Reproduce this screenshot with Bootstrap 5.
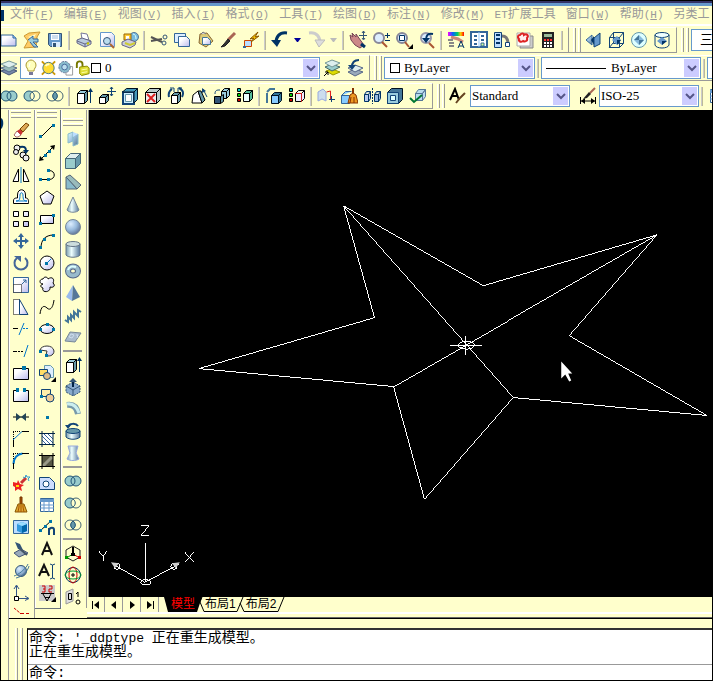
<!DOCTYPE html>
<html lang="zh-CN">
<head>
<meta charset="utf-8">
<meta name="viewport" content="width=device-width, initial-scale=1">
<title>CAD 绘图</title>
<link href="https://cdn.jsdelivr.net/npm/bootstrap@5.3.0/dist/css/bootstrap.min.css" rel="stylesheet">
<style>
:root{--cream:#ffffcc;--line:#999;--blue:#6699cc}
body{font:12px/14px "Liberation Serif","Noto Sans CJK SC",serif;color:#000;background:var(--cream);border:1px solid #000;overflow:hidden}
button,select,input{font:inherit;color:inherit}
svg{display:block;flex:none}
.titlestrip{height:5px;background:var(--blue);border-top:2px solid #336}
.menubar{height:20px;padding-left:9px;border-bottom:2px solid #fff;background:var(--cream)}
.menubar a{color:#999;text-decoration:none;white-space:nowrap;margin-right:10px;font:12px/16px "Liberation Mono","Noto Sans CJK SC",monospace}
.menubar small{font-size:11px;line-height:16px}
.menubar .edge{width:3px;height:11px;background:#036;margin:0 6px 0 -9px}
.bar{height:28px;overflow:hidden;background:var(--cream)}
.bar>*{flex:none}
.seg{height:26px;border-right:1px solid var(--line);border-bottom:1px solid var(--line);border-top:1px solid #fff;padding-right:3px}
.clip{margin-left:-4px}
.tool{width:23px;height:22px;padding:0;border:0;background:none;display:flex;align-items:center;justify-content:center;flex:none}
.tool svg{width:18px;height:18px}
.drop{width:13px}
.drop svg{width:7px;height:4px}
.undo-list{color:#009}
.redo-list{color:#bbb}
.split{width:2px;height:19px;margin:0 2px;border-left:1px solid #ccc;border-right:1px solid #bbb999}
.split-h{height:2px;width:19px;margin:2px 0;background:var(--line)}
.grip{width:8px;height:24px;display:flex;justify-content:space-between;flex:none}
.grip::before,.grip::after{content:"";width:3px;border-left:1px solid #fff;border-right:1px solid var(--line);background:var(--cream)}
.grip-h{width:20px;height:8px;margin-bottom:2px;flex-direction:column}
.grip-h::before,.grip-h::after{width:auto;height:3px;border:0;border-top:1px solid #fff;border-bottom:1px solid var(--line)}
.grip-dock{height:auto;margin:0 4px 0 6px}
.combo{height:22px;background:#fff;border:1px solid var(--blue);padding:1px;display:flex;align-items:center;overflow:hidden}
.combo select{appearance:none;border:0;background:none;padding:0;flex:1 1 0;min-width:0;font-size:13px;line-height:16px;outline-offset:-1px}
.combo .arrow{width:15px;height:18px;background:#ccccff}
.after{margin-left:2px}
.w-style{width:100px}
.w-color{width:151px}
.w-type{width:160px}
.w-layer{width:300px}
.swatch{width:10px;height:10px;border:1px solid #000;background:#fff;flex:none}
.tools{width:26px;padding-right:2px;border-right:1px solid var(--line);box-shadow:inset 1px 0 #fff;align-self:flex-start}
.tools .tool{height:22px}
.gutter{width:7px}
.work{border-left:1px solid var(--line)}
.stage{background:#000;border-left:1px solid var(--line);min-width:0;margin-left:1px}
.stage svg{width:100%;height:100%}
.tabs{height:15px;background:var(--cream)}
.tabs button{height:15px;border:0;padding:0;background:none}
.tabs .step{width:18px;border-right:1px solid var(--line);display:flex;align-items:center;justify-content:center}
.tabs .sheet{border-bottom:1px solid #000;font:12px/14px "Liberation Sans","Noto Sans CJK SC",sans-serif}
.tabs .current{background:#000;color:#f00}
.foot{height:6px;border-top:2px solid #fff;border-bottom:1px solid #666}
.dock{border-top:1px solid #000;padding-top:9px}
.console{background:#fff;border-top:2px solid #333;border-left:1px solid #000;font:13px/14px "Liberation Mono","Noto Sans CJK SC",monospace}
.console .zh{font-size:14px;line-height:14px}
.console .log{height:34px;padding:1px 1px 0;overflow:hidden}
.console .log div{height:14px;white-space:pre}
.console .entry{border-top:1px solid var(--line);height:16px;padding:1px 1px 0;overflow:hidden}
.console input{border:0;padding:0;outline:0;background:none;height:14px}
</style>
<script src="https://cdn.jsdelivr.net/npm/bootstrap@5.3.0/dist/js/bootstrap.bundle.min.js"></script>
</head>
<body class="vh-100 d-flex flex-column">
<svg width="0" height="0" class="position-absolute" aria-hidden="true">
<defs>
<linearGradient id="gl" x1="0" y1="0" x2="1" y2="1"><stop offset=".3" stop-color="#fff"/><stop offset="1" stop-color="#bbe"/></linearGradient>
<linearGradient id="gs" x1="0" y1="0" x2="1" y2="1"><stop offset="0" stop-color="#dff"/><stop offset=".5" stop-color="#9bd"/><stop offset="1" stop-color="#578"/></linearGradient>
<linearGradient id="gh" x1="0" y1="0" x2="1" y2="0"><stop offset="0" stop-color="#79a"/><stop offset=".4" stop-color="#eff"/><stop offset="1" stop-color="#579"/></linearGradient>
<radialGradient id="gr" cx=".35" cy=".3" r=".8"><stop offset="0" stop-color="#def"/><stop offset=".5" stop-color="#9bd"/><stop offset="1" stop-color="#568"/></radialGradient>
<linearGradient id="rainbow"><stop offset="0" stop-color="#f0f"/><stop offset=".3" stop-color="#06f"/><stop offset=".6" stop-color="#0c6"/><stop offset=".8" stop-color="#fc0"/><stop offset="1" stop-color="#f00"/></linearGradient>
</defs>
<!-- file tools -->
<symbol id="new" viewBox="0 0 18 18"><path d="M1 4h12l3 3v8H1z" fill="url(#gl)" stroke="#369"/><path d="M13 4v3h3" fill="#9cf" stroke="#369"/></symbol>
<symbol id="open" viewBox="0 0 18 18"><path d="M1 5l5-3 11-1-3 5-1 10-12 1 4-7z" fill="#fc6" stroke="#c93"/><path d="M5 6l8-3-3 5z" fill="#ffc"/><path d="M5 9l5-4v3h5v3h-5l5 5h-4l-4-5" fill="#9cd" stroke="#369"/></symbol>
<symbol id="save" viewBox="0 0 18 18"><path d="M2.500 2.500h13v13h-11l-2-2z" fill="#69c" stroke="#357"/><path d="M5 3h8v6H5z" fill="#fff"/><path d="M6 5h6M6 7h6" stroke="#9bd"/><path d="M6 11h8v5H6z" fill="#def"/><path d="M7 12h3v4H7z" fill="#357"/></symbol>
<symbol id="print" viewBox="0 0 18 18"><path d="M6 2l6 1 2 6-7-1z" fill="#fff" stroke="#779"/><path d="M2 9l5-2 9 3v3l-6 3-8-4z" fill="#bcd" stroke="#668"/><path d="M2 10l8 3 6-3M10 13v3" stroke="#668" fill="none"/><path d="M12 13l2-1" stroke="#cc0" stroke-width="2"/></symbol>
<symbol id="preview" viewBox="0 0 18 18"><path d="M2.500 1.500h11l3 3v11h-14z" fill="url(#gl)" stroke="#69c"/><circle cx="9" cy="10" r="3.500" fill="#bde" stroke="#357"/><path d="M12 13l4 4" stroke="#a63" stroke-width="2"/></symbol>
<symbol id="publish" viewBox="0 0 18 18"><circle cx="13" cy="6" r="4.500" fill="#7bd" stroke="#579"/><path d="M12 3c2 0 3 2 3 5" stroke="#dff" fill="none"/><path d="M3 3h7v6H3z" fill="#fc3" stroke="#960"/><path d="M5 5h3v3H5z" fill="#fff"/><path d="M1 11l6-3 8 3-1 3-5 3-8-3z" fill="#ccd" stroke="#668"/><path d="M4 12l5 2 5-2" stroke="#cc3" fill="none" stroke-width="2"/></symbol>
<symbol id="cut" viewBox="0 0 18 18"><path d="M1 6l11 5M1 10l11-2" stroke="#555" stroke-width="2"/><circle cx="15" cy="6" r="2" fill="none" stroke="#357"/><circle cx="14" cy="12" r="2" fill="none" stroke="#357"/></symbol>
<symbol id="copy" viewBox="0 0 18 18"><path d="M1.500 2.500h11v9h-11z" fill="#def" stroke="#369"/><path d="M5.500 5.500h8l3 3v7h-11z" fill="url(#gl)" stroke="#369"/></symbol>
<symbol id="paste" viewBox="0 0 18 18"><path d="M4 3l7-1 6 8-7 6-7-4z" fill="#dc7" stroke="#863"/><path d="M6.500 6.500h5l3 3v4h-8z" fill="url(#gl)" stroke="#479"/><path d="M5 3l2-2 3 2" stroke="#777" fill="#ccc"/></symbol>
<symbol id="brush" viewBox="0 0 18 18"><path d="M16 2L9 9" stroke="#a65" stroke-width="3"/><path d="M9 8l2 2-5 5-4 1 3-3z" fill="#333" stroke="#222"/></symbol>
<symbol id="blockedit" viewBox="0 0 18 18"><path d="M2.500 9.500h7v6h-7z" fill="#bdf" stroke="#c40"/><path d="M16 1L8 8l4-1-3 4 8-6-4 1z" fill="#fc0" stroke="#850"/><path d="M1 15h3v2H1z" fill="#369"/></symbol>
<symbol id="undo" viewBox="0 0 18 18"><path d="M16 2C8 1 5 6 5 12" fill="none" stroke="#036" stroke-width="3"/><path d="M0 9h10l-4 7z" fill="#036"/></symbol>
<symbol id="redo" viewBox="0 0 18 18"><path d="M2 2c8-1 11 4 11 10" fill="none" stroke="#ccc" stroke-width="3"/><path d="M18 9H8l4 7z" fill="#ddd" stroke="#bbb"/></symbol>
<symbol id="tri" viewBox="0 0 7 4"><path d="M0 0h7L4 4H3z" fill="currentColor"/></symbol>
<symbol id="pan" viewBox="0 0 18 18"><path d="M1 4l3 2-1-4 4 4V3l5 7 3 4-4 3-5-3-4-5z" fill="#c88" stroke="#745"/><path d="M12 13l4 3" stroke="#036" stroke-width="3"/><path d="M14.500 0v8M10 4.500h8M13 2l1.500-2L16 2M13 7l1.500 2L16 7" stroke="#357" fill="none"/></symbol>
<symbol id="zoompm" viewBox="0 0 18 18"><circle cx="7" cy="7" r="5" fill="#def" stroke="#889" stroke-width="2"/><path d="M10 11l5 5" stroke="#a53" stroke-width="2"/><path d="M13 4.500h5M15.500 2v5M13 9.500h5" stroke="#036"/></symbol>
<symbol id="zoomwin" viewBox="0 0 18 18"><circle cx="7" cy="7" r="5" fill="#def" stroke="#889" stroke-width="2"/><path d="M4.500 4.500h5v5h-5z" fill="#fff" stroke="#036"/><path d="M10 11l4 5" stroke="#a53" stroke-width="2"/><path d="M18 13v5h-5z"/></symbol>
<symbol id="zoomprev" viewBox="0 0 18 18"><circle cx="8" cy="7" r="5" fill="#def" stroke="#99a" stroke-width="2"/><path d="M11 12l5 5" stroke="#a53" stroke-width="2"/><path d="M15 3C10 2 8 4 8 9" stroke="#036" stroke-width="2" fill="none"/><path d="M4 7h8l-4 5z" fill="#036"/></symbol>
<symbol id="props" viewBox="0 0 18 18"><path d="M1 1h16v4H1z" fill="url(#rainbow)"/><path d="M4 6l7 2 5 3" stroke="#c87" stroke-width="3" fill="none"/><path d="M1 9h5M2 12h5M2 15h5" stroke="#888" stroke-width="2"/><path d="M11 17l3-7 3 7M12 15h4" stroke="#036" fill="none"/></symbol>
<symbol id="palette" viewBox="0 0 18 18"><path d="M1 1h16v15H1z" fill="#fff" stroke="#369" stroke-width="2"/><path d="M4 4h3v2H4zM11 4h3v2h-3zM4 8h3v2H4zM11 8h3v2h-3zM4 12h3v2H4z" fill="#369"/><path d="M11 12h3v3h-3z" fill="#cf9" stroke="#369"/><path d="M9 1v15" stroke="#9cf"/></symbol>
<symbol id="toolpal" viewBox="0 0 18 18"><path d="M1.500 1.500h7v15h-7z" fill="#bdf" stroke="#147"/><path d="M3 4h4M3 8h4M3 12h4" stroke="#036" stroke-width="2"/><path d="M9 5c4 0 5 2 6 6" fill="none" stroke="#777" stroke-width="3"/><path d="M12.500 11.500h4v4h-4z" fill="#fff" stroke="#147"/></symbol>
<symbol id="markup" viewBox="0 0 18 18"><path d="M6 5h11v12H4z" fill="#ccc" stroke="#888"/><path d="M1 2h13v13H1z" fill="#fff" stroke="#aaa"/><path d="M4 4c2-3 4-1 4 0 3-2 5 1 3 3 1 3-2 4-4 3-3 2-5-1-4-2-2-2-1-4 1-4z" fill="#fee" stroke="#d22" stroke-width="2"/></symbol>
<symbol id="calc" viewBox="0 0 18 18"><path d="M3 1h12v16H3z" fill="#222"/><path d="M5 3h8v3H5z" fill="#9b9"/><path d="M5 8h2v2H5zM8 8h2v2H8zM11 8h2v2h-2z" fill="#f33"/><path d="M5 11h2v2H5zM8 11h2v2H8zM11 11h2v2h-2zM5 14h2v2H5zM8 14h2v2H8zM11 14h2v2h-2z" fill="#fff"/></symbol>
<symbol id="orb" viewBox="0 0 18 18"><path d="M2 9l6-5v10z" fill="url(#gs)" stroke="#369"/><path d="M7 9l3-4v9z" fill="#036"/><path d="M10 7l6-5v11l-6 3z" fill="#69c" stroke="#147"/></symbol>
<symbol id="orbbox" viewBox="0 0 18 18"><path d="M2.500 6.500h10v10h-10zM2.500 6.500l4-5h10v11l-4 4M12.500 6.500l4-5M6.500 1.500v11h10M6 12l-4 5" fill="none" stroke="#147"/><path d="M5 9l5-4 4 4-4 5z" fill="#69c"/><path d="M10 9h4l-4 5z" fill="#036"/></symbol>
<symbol id="orbsph" viewBox="0 0 18 18"><circle cx="9" cy="9" r="7.500" fill="#dff" stroke="#69a"/><path d="M4 9l5-5 5 5-5 5z" fill="#8bd"/><path d="M9 9h5l-5 5zM9 9V4L4 9z" fill="#479"/></symbol>
<symbol id="orbcyl" viewBox="0 0 18 18"><ellipse cx="9" cy="4" rx="7" ry="2.500" fill="#eff" stroke="#147"/><path d="M2 4v10c1 4 13 4 14 0V4" fill="none" stroke="#147"/><path d="M4 10l5-4 5 4-5 4z" fill="#69c"/><path d="M9 10h5l-5 4z" fill="#036"/></symbol>
<!-- layer tools -->
<symbol id="layers" viewBox="0 0 18 18"><path d="M1 12l8-3 8 3-8 4z" fill="#78a" stroke="#457"/><path d="M1 9l8-3 8 3-8 4z" fill="#9bb" stroke="#568"/><path d="M1 5l8-3 8 3-8 4z" fill="#dee" stroke="#799"/></symbol>
<symbol id="bulb" viewBox="0 0 18 18"><path d="M6 12c0-3-2-3-2-6s3-5 5-5 5 2 5 5-2 3-2 6z" fill="#ffb" stroke="#a93"/><path d="M7 13h4v3H7z" fill="#779"/><path d="M8 4l-1 4" stroke="#fff"/></symbol>
<symbol id="sun" viewBox="0 0 18 18"><path d="M2 2l14 14M16 2L2 16" stroke="#c90" stroke-width="2"/><circle cx="9" cy="9" r="6" fill="#fd3" stroke="#478"/><path d="M6 7c1-2 3-2 4-2" stroke="#ffc" fill="none" stroke-width="2"/></symbol>
<symbol id="vp" viewBox="0 0 18 18"><path d="M9.500 7.500h7v9h-7z" fill="#fff" stroke="#999"/><circle cx="8" cy="8" r="6" fill="#8bc" stroke="#679" stroke-dasharray="3 1"/><circle cx="8" cy="8" r="3" fill="#bde" stroke="#469"/></symbol>
<symbol id="lock" viewBox="0 0 18 18"><path d="M3 9V5c0-4 6-4 6 0v3" fill="none" stroke="#770" stroke-width="2"/><path d="M6 8l8-1 2 2v6l-8 2-2-2z" fill="#dd3" stroke="#880"/><path d="M8 11l6-1M8 14l6-1" stroke="#ffa"/></symbol>
<symbol id="laycur" viewBox="0 0 18 18"><path d="M3 12l6-2 8 3-7 3z" fill="#dd0" stroke="#990"/><path d="M2 8l7-3 8 3-8 4z" fill="#9cc" stroke="#466"/><path d="M2 4l7-3 8 3-8 4z" fill="#dee" stroke="#799"/><path d="M1 17l4-4M2 13h3v3" stroke="#000" fill="none"/></symbol>
<symbol id="layprev" viewBox="0 0 18 18"><path d="M2 13l7-3 8 3-8 4z" fill="#9ab" stroke="#568"/><path d="M2 9l7-3 8 3-8 4z" fill="#dee" stroke="#568"/><path d="M13 1C8 1 6 4 6 8" stroke="#147" stroke-width="2" fill="none"/><path d="M2 6h8l-4 5z" fill="#147"/></symbol>
<!-- solid tools -->
<symbol id="uni" viewBox="0 0 18 18"><circle cx="6" cy="9" r="5" fill="#9cc"/><circle cx="12" cy="9" r="5" fill="#9cc"/><g fill="none" stroke="#257"><circle cx="6" cy="9" r="5"/><circle cx="12" cy="9" r="5"/></g></symbol>
<symbol id="sub" viewBox="0 0 18 18"><circle cx="6" cy="9" r="5" fill="#9cc" stroke="#257"/><circle cx="12" cy="9" r="5" fill="#ffffcc" stroke="#467"/><path d="M9 5c3 2 3 6 0 8" fill="none" stroke="#257"/></symbol>
<symbol id="int" viewBox="0 0 18 18"><g fill="none" stroke="#467"><circle cx="6" cy="9" r="5"/><circle cx="12" cy="9" r="5"/></g><path d="M9 5c3 2 3 6 0 8-3-2-3-6 0-8z" fill="#69a" stroke="#257"/></symbol>
<symbol id="exface" viewBox="0 0 18 18"><path d="M2.500 6.500h7v10h-7z" fill="#fff" stroke="#000"/><path d="M2.500 6.500l3-3h7l-3 3z" fill="#9cd" stroke="#000"/><path d="M9.500 6.500l3-3v10l-3 3z" fill="#69a" stroke="#000"/><path d="M15.500 16V2" stroke="#036" stroke-width="1"/><path d="M13 5l2.500-4L18 5z" fill="#036"/></symbol>
<symbol id="moveface" viewBox="0 0 18 18"><path d="M1.500 10.500h6v6h-6z" fill="#fff" stroke="#000"/><path d="M1.500 10.500l3-3h6v6l-3 3v-6l3-3-3 3z" fill="#69a" stroke="#000"/><path d="M13.500 0v9M9 4.500h9M12 2l1.500-2L15 2M12 7l1.500 2L15 7" stroke="#147" fill="none"/></symbol>
<symbol id="offface" viewBox="0 0 18 18"><path d="M2 5h11v12H2z" fill="#cef" stroke="#147" stroke-width="2"/><path d="M4.500 7.500h6v7h-6z" fill="#fff" stroke="#69a"/><path d="M1.500 5l4-3.500h11L13 5zM13 5l3.500-3.500v11L13 16z" fill="#49b" stroke="#012"/></symbol>
<symbol id="delface" viewBox="0 0 18 18"><path d="M1.500 5.500h11v11h-11z" fill="#eee" stroke="#000"/><path d="M1.500 5.500l4-4h11l-4 4zM12.500 5.500l4-4v11l-4 4z" fill="#bcc" stroke="#000"/><path d="M3 7l8 8M11 7l-8 8" stroke="#d22" stroke-width="2"/></symbol>
<symbol id="rotface" viewBox="0 0 18 18"><path d="M4.500 8.500h6v8h-6z" fill="#fff" stroke="#000"/><path d="M4.500 8.500l3-3h6l-3 3zM10.500 8.500l3-3v8l-3 3z" fill="#69a" stroke="#000"/><path d="M5 2C2 4 1 6 2 10M12 1c4 2 5 5 3 9" stroke="#147" stroke-width="2" fill="none"/><path d="M3 1h4v4M15 1h-4v4" stroke="#147" fill="none"/></symbol>
<symbol id="taperface" viewBox="0 0 18 18"><path d="M2 16l1-8 5-4 4 12z" fill="#fff" stroke="#000"/><path d="M8 4h3l4 9-3 3z" fill="#69a" stroke="#000"/><path d="M13 2l4 8" stroke="#147"/><path d="M12 6V1l4 3z" fill="#147"/></symbol>
<symbol id="copyface" viewBox="0 0 18 18"><path d="M8.500 4.500l3-3h5v7l-3 3h-5z" fill="#9cd" stroke="#000"/><path d="M8.500 4.500h5v7M13.500 4.500l3-3" fill="none" stroke="#000"/><path d="M1.500 9.500h6v7h-6z" fill="#357" stroke="#000"/><path d="M7.500 9.500l3-2v7l-3 2z" fill="#69a" stroke="#000"/><path d="M2 7c0-4 2-4 5-4" fill="none" stroke="#147"/></symbol>
<symbol id="colorface" viewBox="0 0 18 18"><path d="M7.500 6.500h6v8h-6z" fill="#eff" stroke="#000"/><path d="M7.500 6.500l3-3h6l-3 3zM13.500 6.500l3-3v8l-3 3z" fill="#5b9" stroke="#000"/><path d="M1.500 1.500h3v3h-3z" fill="#0cc" stroke="#000"/><path d="M1.500 6.500h3v3h-3z" fill="#0c0" stroke="#000"/><path d="M1.500 11.500h3v3h-3z" fill="#c00" stroke="#000"/></symbol>
<symbol id="copyedge" viewBox="0 0 18 18"><path d="M6.500 8.500h7v8h-7z" fill="#8cf" stroke="#012"/><path d="M6.500 8.500l3-3h7l-3 3zM13.500 8.500l3-3v8l-3 3z" fill="#379" stroke="#012"/><path d="M2 16V6M2 5l3-3h5" fill="none" stroke="#479" stroke-width="2"/></symbol>
<symbol id="coloredge" viewBox="0 0 18 18"><path d="M7.500 6.500h6v8h-6zM7.500 6.500l3-3h6v8l-3 3v-8l3-3" fill="#eef" stroke="#000"/><path d="M13.500 6v9M7 6.500h7" fill="none" stroke="#c22"/><path d="M1.500 1.500h3v3h-3z" fill="#0cc" stroke="#000"/><path d="M1.500 6.500h3v3h-3z" fill="#0c0" stroke="#000"/><path d="M1.500 11.500h3v3h-3z" fill="#c00" stroke="#000"/></symbol>
<symbol id="imprint" viewBox="0 0 18 18"><path d="M1 5l5-3 3 3v9l-4-2-4 2z" fill="#cde" stroke="#9ad"/><path d="M9.500 5l4-1v9" fill="none" stroke="#d22" stroke-width="1"/><path d="M14.500 9v6M12 12.500h6" stroke="#147"/></symbol>
<symbol id="clean" viewBox="0 0 18 18"><path d="M1.500 8.500h8v8h-8zM1.500 8.500l4-4h6" fill="#8cf" stroke="#369"/><path d="M12 1h2v6h-2z" fill="#830"/><path d="M10 8l3-2 3 2 2 8H8z" fill="#e92" stroke="#830"/><path d="M11 10l-1 6M14 10v6" stroke="#830"/></symbol>
<symbol id="separate" viewBox="0 0 18 18"><path d="M1.500 7.500h4v7h-4zM1.500 7.500l2-3h4v7l-2 3v-7l2-3" fill="#bce" stroke="#036"/><path d="M11.500 7.500h4v7h-4zM11.500 7.500l2-3h4v7l-2 3v-7l2-3" fill="#9bd" stroke="#036"/><path d="M9.500 1v16" stroke="#036" stroke-dasharray="2 1"/></symbol>
<symbol id="shell" viewBox="0 0 18 18"><path d="M1.500 5.500l4-4h11v11l-4 4h-11z" fill="#479" stroke="#012"/><path d="M1.500 5.500h11v11h-11z" fill="#9cd" stroke="#147"/><path d="M4.500 8.500h5v5h-5z" fill="#dff" stroke="#147"/></symbol>
<symbol id="check" viewBox="0 0 18 18"><path d="M6.500 6.500h7v7h-7zM6.500 6.500l3-4h7l-3 4zM13.500 6.500l3-4v7l-3 4z" fill="#bde" stroke="#579"/><path d="M1 11l4 4 8-7" stroke="#073" stroke-width="2" fill="none"/></symbol>
<symbol id="textstyle" viewBox="0 0 18 18"><path d="M2 13L7 2l4 11M4 9h6" fill="none" stroke="#000" stroke-width="2"/><path d="M17 6l-5 5-4 5" stroke="#642" stroke-width="2" fill="none"/></symbol>
<symbol id="dimstyle" viewBox="0 0 18 18"><path d="M1.500 10v7M16.500 10v7M1 14h16" stroke="#000" fill="none"/><path d="M6 11l-4 3 4 3zM12 11l4 3-4 3z"/><path d="M16 1l-5 5" stroke="#a65" stroke-width="2"/><path d="M10 5l2 2-4 4-4 1z" fill="#222"/></symbol>
<!-- modify tools -->
<symbol id="erase" viewBox="0 0 18 18"><path d="M1 16.500h14" stroke="#000"/><path d="M5 9l4 4-3 2H4l-2-2z" fill="#fff" stroke="#a66"/><path d="M5 9l3-2 3 3-2 3z" fill="#c33"/><path d="M8 7l6-6 3 2-6 7z" fill="#da5" stroke="#740"/></symbol>
<symbol id="dup" viewBox="0 0 18 18"><g fill="#eee" stroke="#000"><circle cx="5" cy="4" r="3"/><circle cx="4" cy="8" r="2.500"/><circle cx="11" cy="11" r="3"/><circle cx="14" cy="14" r="3"/></g><path d="M8 3c4-1 6 0 6 4" stroke="#036" fill="none" stroke-width="2"/><path d="M11 6h6l-3 4z" fill="#036"/></symbol>
<symbol id="mirror" viewBox="0 0 18 18"><path d="M6.500 3v12.500H1zM11.500 3v12.500H17z" fill="#fff" stroke="#000"/><path d="M9 1v16" stroke="#07c"/></symbol>
<symbol id="offset" viewBox="0 0 18 18"><path d="M1.500 15.500V13c0-3 2-3 4-3V7c0-7 8-7 8 0v3c3 0 3 2 3 5.500z" fill="#fff" stroke="#000"/><path d="M4 13c3 0 4-1 4-6 0-3 3-3 3 0 0 5 1 6 4 6z" fill="#ffffcc" stroke="#07c"/></symbol>
<symbol id="array" viewBox="0 0 18 18"><g fill="url(#gl)" stroke="#000"><path d="M1.500 1.500h5v5h-5zM11.500 1.500h5v5h-5zM1.500 11.500h5v5h-5zM11.500 11.500h5v5h-5z"/></g></symbol>
<symbol id="move" viewBox="0 0 18 18"><path d="M9 3v12M3 9h12" stroke="#369" stroke-width="2"/><path d="M9 1l3 4H6zM9 17l3-4H6zM1 9l4-3v6zM17 9l-4-3v6z" fill="#369"/></symbol>
<symbol id="rotate" viewBox="0 0 18 18"><path d="M5 4a6.500 6.500 0 1 0 8 0" fill="none" stroke="#469" stroke-width="2"/><path d="M2 2h7v6z" fill="#469"/></symbol>
<symbol id="scale" viewBox="0 0 18 18"><path d="M1.500 1.500h15v15h-15z" fill="url(#gl)" stroke="#369"/><path d="M1.500 8.500h8v8h-8z" fill="#fff" stroke="#000" stroke-dasharray="1 1"/><path d="M10 8l4-4M11 4h3v3" stroke="#369" fill="none"/></symbol>
<symbol id="stretch" viewBox="0 0 18 18"><path d="M1.500 1.500h6v15h-6z" fill="#fff" stroke="#000" stroke-dasharray="1 1"/><path d="M7.500 1.500L16 16.500H7.500z" fill="url(#gl)" stroke="#147"/></symbol>
<symbol id="trim" viewBox="0 0 18 18"><path d="M1 8.500h5" stroke="#000"/><path d="M7 15l5-12" stroke="#07c"/><path d="M11 8.500h6" stroke="#07c" stroke-dasharray="2 1"/></symbol>
<symbol id="extend" viewBox="0 0 18 18"><path d="M1 9.500h4" stroke="#000"/><path d="M6 9.500h5" stroke="#000" stroke-dasharray="2 1"/><path d="M12 15l4-12" stroke="#07c"/></symbol>
<symbol id="brkpt" viewBox="0 0 18 18"><path d="M1.500 4.500h15v11h-15z" fill="url(#gl)" stroke="#000"/><path d="M10 2h4v4h-4z" fill="#07a"/></symbol>
<symbol id="brk" viewBox="0 0 18 18"><path d="M2 5h14v11H2z" fill="url(#gl)"/><path d="M5 4.500H1.500v11h15v-11H13" fill="none" stroke="#000"/><path d="M4 2h3v4H4zM11 2h3v4h-3z" fill="#07a"/></symbol>
<symbol id="join" viewBox="0 0 18 18"><path d="M1 9h16" stroke="#000"/><path d="M4 5l5 4-5 4zM14 5L9 9l5 4z" fill="#245"/></symbol>
<symbol id="chamfer" viewBox="0 0 18 18"><path d="M1 1.500h8M1.500 2v8" stroke="#000" stroke-dasharray="1 1"/><path d="M1 10L10 1.500" stroke="#07c"/><path d="M10 1.500h7M1.500 10v7" stroke="#000"/></symbol>
<symbol id="fillet" viewBox="0 0 18 18"><path d="M1 1.500h8M1.500 2v8" stroke="#000" stroke-dasharray="1 1"/><path d="M1.500 12c0-6 4-10 9-10.500" fill="none" stroke="#07c" stroke-width="2"/><path d="M10 1.500h7M1.500 11v6" stroke="#000" stroke-width="1"/></symbol>
<symbol id="explode" viewBox="0 0 18 18"><path d="M1 8l4 1 1-3 2 4 4 1-3 2 1 4-4-2-3 2v-4l-2-1z" fill="#e22"/><path d="M4 11h3v2H4z" fill="#fd0"/><path d="M9 9l5-5" stroke="#c33" stroke-width="3"/><path d="M11 3l2 1 1-3 1 2 3 0-2 2 1 2" stroke="#39c" fill="none"/></symbol>
<symbol id="broom" viewBox="0 0 18 18"><path d="M8 1h2v7H8z" fill="#a50" stroke="#730"/><path d="M6 8h6l3 8H3z" fill="#da3" stroke="#850"/><path d="M6 10h6M7 11l-1 5M9 11v5M11 11l1 5" stroke="#a50"/></symbol>
<symbol id="bluebox" viewBox="0 0 18 18"><path d="M1.500 2.500h15v13h-15z" fill="#bdf" stroke="#369"/><path d="M5 6l5-2 5 2v7l-5 2-5-2z" fill="#39d"/><path d="M10 8l5-2v7l-5 2z" fill="#06a"/><path d="M5 6l5 2 5-2-5-2z" fill="#9df"/></symbol>
<symbol id="trowel" viewBox="0 0 18 18"><path d="M3 2l5 2 3 6-5-1z" fill="#357"/><path d="M2 13l7-4 7 4-9 4z" fill="#9ab" stroke="#457"/><path d="M8 9l7 6" stroke="#456" stroke-width="2"/></symbol>
<symbol id="planet" viewBox="0 0 18 18"><circle cx="9" cy="9" r="5.500" fill="url(#gr)" stroke="#357"/><path d="M2 14c4-1 12-7 14-12M4 16c6-1 12-7 13-12" fill="none" stroke="#479"/></symbol>
<symbol id="ucs" viewBox="0 0 18 18"><path d="M4.500 14V2M4 14.500h12M2 5l2.500-4L7 5M13 12l4 2.500-4 2" fill="none" stroke="#358"/><path d="M2.500 12.500h4v4h-4z" fill="#fff" stroke="#000"/></symbol>
<symbol id="redline" viewBox="0 0 18 18"><path d="M2 2l6 5" stroke="#c00" stroke-dasharray="3 1"/><path d="M8 7.500h9" stroke="#c00" stroke-dasharray="4 2"/></symbol>
<!-- draw tools -->
<symbol id="seg" viewBox="0 0 18 18"><path d="M3 15L15 3" stroke="#000"/><path d="M1 13h3v3H1zM14 2h3v3h-3z" fill="#07a"/></symbol>
<symbol id="xline" viewBox="0 0 18 18"><path d="M2 16L16 2" stroke="#000"/><path d="M1 17l1-5 4 4zM17 1l-5 1 4 4z"/><path d="M10 6h3v3h-3zM6 10h3v3H6z" fill="#07a"/></symbol>
<symbol id="pline" viewBox="0 0 18 18"><path d="M2 13.500h9c7 0 7-9 0-9" fill="none" stroke="#000"/><path d="M1 12h3v3H1zM9 12h3v3H9zM9 3h3v3H9z" fill="#07a"/></symbol>
<symbol id="poly" viewBox="0 0 18 18"><path d="M9 3l7 5-3 8H5L2 8z" fill="url(#gl)" stroke="#000"/></symbol>
<symbol id="rect" viewBox="0 0 18 18"><path d="M2.500 5.500h13v8h-13z" fill="url(#gl)" stroke="#000"/><path d="M1 12h3v3H1zM14 4h3v3h-3z" fill="#07a"/></symbol>
<symbol id="arc" viewBox="0 0 18 18"><path d="M3 16C3 8 7 3 16 3" fill="none" stroke="#000"/><path d="M1 14h3v3H1zM5 6h3v3H5zM14 2h3v3h-3z" fill="#07a"/></symbol>
<symbol id="circ" viewBox="0 0 18 18"><circle cx="9" cy="9" r="7" fill="url(#gl)" stroke="#000"/><path d="M9 9l4-4" stroke="#07c"/><path d="M7 8h3v3H7z" fill="#07a"/></symbol>
<symbol id="cloud" viewBox="0 0 18 18"><path d="M5 8C1 8 1 3 5 3c1-3 5-2 5 0 4-3 7 0 5 4 3 3 0 5-3 4 1 6-9 6-7 1-3-1-3-3 0-4z" fill="url(#gl)" stroke="#000"/></symbol>
<symbol id="spline" viewBox="0 0 18 18"><path d="M2 16c1-8 4-9 7-6s6 0 7-8" fill="none" stroke="#000"/></symbol>
<symbol id="ell" viewBox="0 0 18 18"><ellipse cx="9" cy="9" rx="7" ry="4.500" fill="url(#gl)" stroke="#000"/><path d="M1 8h3v3H1zM14 8h3v3h-3zM8 3h3v3H8z" fill="#07a"/></symbol>
<symbol id="ellarc" viewBox="0 0 18 18"><path d="M2 8c1-5 13-6 14 1 0 5-6 6-8 4l1-4z" fill="url(#gl)" stroke="#333"/><path d="M1 8h3v3H1zM7 12h3v3H7z" fill="#07a"/></symbol>
<symbol id="insert" viewBox="0 0 18 18"><path d="M6.500 1.500h6l3 3v9h-9z" fill="#def" stroke="#69a"/><path d="M1.500 5.500h8v6h-8z" fill="#fd6" stroke="#147"/><circle cx="9" cy="12" r="3.500" fill="#db8" stroke="#147"/><path d="M18 13v5h-5z"/></symbol>
<symbol id="block" viewBox="0 0 18 18"><path d="M3.500 3.500h9v7h-9z" fill="#fea" stroke="#147"/><circle cx="12" cy="12" r="4" fill="#ec9" stroke="#147"/><path d="M2 9h3v3H2z" fill="#07a"/></symbol>
<symbol id="point" viewBox="0 0 18 18"><path d="M8 8h3v3H8z" fill="#07a"/></symbol>
<symbol id="hatch" viewBox="0 0 18 18"><path d="M4 4h11v11H4z" fill="#fff"/><path d="M4 6l9 9M4 10l5 5M6 4l9 9M10 4l5 5" stroke="#369"/><path d="M1 3.500h16M1 14.500h16M4 1v16M15 1v16" stroke="#024"/></symbol>
<symbol id="gradient" viewBox="0 0 18 18"><path d="M4 4h11v11H4z" fill="#575745"/><path d="M5 14l9-9" stroke="#998" stroke-width="3"/><path d="M1 3.500h16M1 14.500h16M4 1v16M15 1v16" stroke="#000"/></symbol>
<symbol id="region" viewBox="0 0 18 18"><path d="M1.500 3.500h10l5 5v7h-15z" fill="#cdf" stroke="#147"/><circle cx="8" cy="10" r="3" fill="#fff" stroke="#147"/></symbol>
<symbol id="grid" viewBox="0 0 18 18"><path d="M2.500 2.500h13v13h-13z" fill="#fff" stroke="#369"/><path d="M2 3h14v3H2z" fill="#69c"/><path d="M2 9h14M2 12h14M6 6v10M11 6v10" stroke="#69c"/></symbol>
<symbol id="divide" viewBox="0 0 18 18"><path d="M2 13L14 2" stroke="#000"/><path d="M1 11h3v3H1zM6 7h3v3H6zM11 2h3v3h-3z" fill="#07a"/><path d="M11 17v-7M11 12c1-3 5-3 5 0v5" stroke="#147" stroke-width="2" fill="none"/></symbol>
<symbol id="dtext" viewBox="0 0 18 18"><path d="M4 15L9 3l5 12M5 11h8" stroke="#111" stroke-width="2" fill="none"/></symbol>
<symbol id="mtext" viewBox="0 0 18 18"><path d="M1 14L6 3l5 11M3 10h7" stroke="#111" stroke-width="2" fill="none"/><path d="M14.500 3v13M12 2l2.500 1L17 2M12 17l2.500-1 2.500 1" stroke="#147" fill="none"/></symbol>
<symbol id="rough" viewBox="0 0 18 18"><path d="M1 1h16v16H1z" fill="#ccc"/><path d="M4 2h3v6H4M5 5h2M11 2h3v3h-3v3h3" stroke="#c00" fill="none"/><path d="M3 9.500h13M5 10l4 7 4-7M7 13.500h5" stroke="#000" fill="none"/><path d="M18 13v5h-5z"/></symbol>
<!-- 3D primitives -->
<symbol id="polysolid" viewBox="0 0 18 18"><path d="M4 4l5-2v9l-5 2zM9 7l5-3v10l-5 2z" fill="url(#gs)" stroke="#8bc"/><path d="M9 2l5 2-5 3" fill="#bdf"/></symbol>
<symbol id="cube" viewBox="0 0 18 18"><path d="M1.500 6.500h10v10h-10z" fill="#9cc" stroke="#467"/><path d="M1.500 6.500l5-5h10l-5 5z" fill="#dee" stroke="#467"/><path d="M11.500 6.500l5-5v10l-5 5z" fill="#69a" stroke="#467"/></symbol>
<symbol id="wedge" viewBox="0 0 18 18"><path d="M2 3l4-2 11 10-4 4z" fill="#9bb" stroke="#567"/><path d="M2 3l11 12H2z" fill="#8bc" stroke="#567"/></symbol>
<symbol id="cone" viewBox="0 0 18 18"><path d="M9 1L3 14c2 3 10 3 12 0z" fill="url(#gh)" stroke="#789"/></symbol>
<symbol id="sphere" viewBox="0 0 18 18"><circle cx="9" cy="9" r="7.500" fill="url(#gr)" stroke="#789"/></symbol>
<symbol id="cyl" viewBox="0 0 18 18"><path d="M2 4v11c2 3 12 3 14 0V4z" fill="url(#gh)" stroke="#678"/><ellipse cx="9" cy="4" rx="7" ry="2.500" fill="#cdd" stroke="#678"/></symbol>
<symbol id="torus" viewBox="0 0 18 18"><ellipse cx="9" cy="9" rx="5" ry="4.500" fill="none" stroke="#568" stroke-width="6"/><ellipse cx="9" cy="9" rx="5" ry="4.500" fill="none" stroke="#9bc" stroke-width="4"/><path d="M4 8c1-4 5-4 8-3" fill="none" stroke="#dff" stroke-width="2"/></symbol>
<symbol id="pyr" viewBox="0 0 18 18"><path d="M9 1L2 13l6 4z" fill="#9be"/><path d="M9 1l7 12-8 4z" fill="#579"/></symbol>
<symbol id="helix" viewBox="0 0 18 18"><path d="M1 14l3 2v-5l3 3V9l3 3V6l4 4V4l3 2" fill="none" stroke="#479" stroke-width="2"/></symbol>
<symbol id="planar" viewBox="0 0 18 18"><path d="M6 4l11 1-6 9-10-1z" fill="#abc" stroke="#789"/><path d="M7 6l3 1-2 3-3-1zM12 7h2l-1 3" stroke="#cde" fill="none"/></symbol>
<symbol id="presspull" viewBox="0 0 18 18"><path d="M2 8l7-4 7 4v6l-7 4-7-4z" fill="#8ac" stroke="#357" stroke-dasharray="2 1"/><path d="M2 8l7 4 7-4M9 12v6" stroke="#357" fill="none"/><path d="M9 9V2" stroke="#024" stroke-width="2"/><path d="M5 4l4-4 4 4z" fill="#357"/></symbol>
<symbol id="sweep" viewBox="0 0 18 18"><path d="M3 5c7-1 10 3 11 9" fill="none" stroke="#79a" stroke-width="6"/><path d="M3 4c7-1 10 3 12 9" fill="none" stroke="#cee" stroke-width="3"/></symbol>
<symbol id="revolve" viewBox="0 0 18 18"><path d="M2 9v6c3 3 11 3 14 0V9z" fill="url(#gh)" stroke="#147"/><ellipse cx="9" cy="9" rx="7" ry="2.500" fill="#69a" stroke="#147"/><path d="M4 5c1-4 8-4 10-1" stroke="#147" fill="none" stroke-width="2"/><path d="M1 3h6l-3 4z" fill="#147"/></symbol>
<symbol id="loft" viewBox="0 0 18 18"><path d="M4 2h10l-2 7 3 6c-3 2-9 2-12 0l3-6z" fill="url(#gh)" stroke="#9ad"/></symbol>
<symbol id="ucs3" viewBox="0 0 18 18"><path d="M9 2l7 4v7l-7 4-7-4V6z" fill="none" stroke="#222"/><path d="M9 3v7" stroke="#000" stroke-width="2"/><path d="M9 10l5 3" stroke="#c00" stroke-width="1"/><path d="M9 10l-5 3" stroke="#090" stroke-width="1"/><path d="M1 12h3v3H1z" fill="#090"/><path d="M14 12h3v3h-3z" fill="#c00"/><path d="M7 9h4v3H7z" fill="#000"/></symbol>
<symbol id="orbit" viewBox="0 0 18 18"><circle cx="9" cy="9" r="7.500" fill="none" stroke="#036"/><ellipse cx="9" cy="9" rx="4" ry="8" fill="none" stroke="#c00"/><ellipse cx="9" cy="9" rx="8" ry="4" fill="none" stroke="#093"/><path d="M9 7v4M7 9h4" stroke="#000"/></symbol>
<symbol id="plane0" viewBox="0 0 18 18"><path d="M2 4l7-3v12l-7 3z" fill="#ddd" stroke="#999"/><path d="M4.500 5.500h3v6h-3z" fill="none" stroke="#000"/><circle cx="14" cy="14" r="2" fill="none" stroke="#000"/><path d="M14 9V4l-2 2" fill="none" stroke="#000"/></symbol>
<symbol id="chev" viewBox="0 0 15 18"><path d="M4 7l4 4 4-4" fill="none" stroke="#558" stroke-width="2"/></symbol>
</svg>

<div class="titlestrip flex-shrink-0"></div>
<nav class="menubar d-flex align-items-center flex-shrink-0 overflow-hidden" aria-label="菜单">
<span class="edge flex-shrink-0"></span>
<a href="#">文件<small>(<u>F</u>)</small></a><a href="#">编辑<small>(<u>E</u>)</small></a><a href="#">视图<small>(<u>V</u>)</small></a><a href="#">插入<small>(<u>I</u>)</small></a><a href="#">格式<small>(<u>O</u>)</small></a><a href="#">工具<small>(<u>T</u>)</small></a><a href="#">绘图<small>(<u>D</u>)</small></a><a href="#">标注<small>(<u>N</u>)</small></a><a href="#">修改<small>(<u>M</u>)</small></a><a href="#"><small>ET</small>扩展工具</a><a href="#">窗口<small>(<u>W</u>)</small></a><a href="#">帮助<small>(<u>H</u>)</small></a><a href="#">另类工</a>
</nav>

<div class="bar d-flex align-items-center flex-shrink-0" role="toolbar" aria-label="标准">
<div class="seg clip d-flex align-items-center">
<button class="tool" aria-label="新建"><svg><use href="#new"/></svg></button>
<button class="tool" aria-label="打开"><svg><use href="#open"/></svg></button>
<button class="tool" aria-label="保存"><svg><use href="#save"/></svg></button>
<span class="split"></span>
<button class="tool" aria-label="打印"><svg><use href="#print"/></svg></button>
<button class="tool" aria-label="打印预览"><svg><use href="#preview"/></svg></button>
<button class="tool" aria-label="发布"><svg><use href="#publish"/></svg></button>
<span class="split"></span>
<button class="tool" aria-label="剪切"><svg><use href="#cut"/></svg></button>
<button class="tool" aria-label="复制"><svg><use href="#copy"/></svg></button>
<button class="tool" aria-label="粘贴"><svg><use href="#paste"/></svg></button>
<button class="tool" aria-label="特性匹配"><svg><use href="#brush"/></svg></button>
<button class="tool" aria-label="块编辑器"><svg><use href="#blockedit"/></svg></button>
<span class="split"></span>
<button class="tool" aria-label="放弃"><svg><use href="#undo"/></svg></button>
<button class="tool drop undo-list" aria-label="放弃列表"><svg><use href="#tri"/></svg></button>
<button class="tool" aria-label="重做"><svg><use href="#redo"/></svg></button>
<button class="tool drop redo-list" aria-label="重做列表"><svg><use href="#tri"/></svg></button>
<span class="split"></span>
<button class="tool" aria-label="实时平移"><svg><use href="#pan"/></svg></button>
<button class="tool" aria-label="实时缩放"><svg><use href="#zoompm"/></svg></button>
<button class="tool" aria-label="窗口缩放"><svg><use href="#zoomwin"/></svg></button>
<button class="tool" aria-label="缩放上一个"><svg><use href="#zoomprev"/></svg></button>
<span class="split"></span>
<button class="tool" aria-label="特性"><svg><use href="#props"/></svg></button>
<button class="tool" aria-label="设计中心"><svg><use href="#palette"/></svg></button>
<button class="tool" aria-label="工具选项板"><svg><use href="#toolpal"/></svg></button>
<button class="tool" aria-label="标记集"><svg><use href="#markup"/></svg></button>
<button class="tool" aria-label="计算器"><svg><use href="#calc"/></svg></button>
<span class="split"></span>
</div>
<div class="seg d-flex align-items-center ps-1">
<span class="grip"></span>
<button class="tool" aria-label="动态观察"><svg><use href="#orb"/></svg></button>
<button class="tool" aria-label="长方体观察"><svg><use href="#orbbox"/></svg></button>
<button class="tool" aria-label="球面观察"><svg><use href="#orbsph"/></svg></button>
<button class="tool" aria-label="柱面观察"><svg><use href="#orbcyl"/></svg></button>
</div>
<div class="d-flex align-items-center ps-1">
<span class="grip"></span>
<div class="combo after w-style ps-2"><select aria-label="视图"><option>三维导航</option></select></div>
</div>
</div>

<div class="bar d-flex align-items-center flex-shrink-0" role="toolbar" aria-label="图层和特性">
<div class="seg clip d-flex align-items-center">
<button class="tool" aria-label="图层管理器"><svg><use href="#layers"/></svg></button>
<div class="combo w-layer">
<svg width="18" height="18"><use href="#bulb"/></svg><svg width="17" height="18"><use href="#sun"/></svg><svg width="17" height="18"><use href="#vp"/></svg><svg width="17" height="18"><use href="#lock"/></svg><span class="swatch"></span>
<select class="ms-1" aria-label="图层"><option>0</option></select><svg class="arrow"><use href="#chev"/></svg></div>
<button class="tool" aria-label="置为当前"><svg><use href="#laycur"/></svg></button>
<button class="tool" aria-label="上一个图层"><svg><use href="#layprev"/></svg></button>
</div>
<div class="seg d-flex align-items-center ps-1">
<span class="grip"></span>
<div class="combo after w-color"><span class="swatch ms-1"></span><select class="ms-1" aria-label="颜色"><option>ByLayer</option></select><svg class="arrow"><use href="#chev"/></svg></div>
<span class="split"></span>
<div class="combo w-type"><svg width="64" height="18"><path d="M3 9.500h60" stroke="#000"/></svg><select class="ms-1" aria-label="线型"><option>ByLayer</option></select><svg class="arrow"><use href="#chev"/></svg></div>
<span class="split"></span>
<div class="combo w-type"><svg width="64" height="18"><path d="M3 9.500h60" stroke="#000"/></svg><select class="ms-1" aria-label="线宽"><option>ByLayer</option></select></div>
</div>
</div>

<div class="bar d-flex align-items-center flex-shrink-0" role="toolbar" aria-label="实体编辑和样式">
<div class="seg clip d-flex align-items-center">
<button class="tool" aria-label="并集"><svg><use href="#uni"/></svg></button>
<button class="tool" aria-label="差集"><svg><use href="#sub"/></svg></button>
<button class="tool" aria-label="交集"><svg><use href="#int"/></svg></button>
<span class="split"></span>
<button class="tool" aria-label="拉伸面"><svg><use href="#exface"/></svg></button>
<button class="tool" aria-label="移动面"><svg><use href="#moveface"/></svg></button>
<button class="tool" aria-label="偏移面"><svg><use href="#offface"/></svg></button>
<button class="tool" aria-label="删除面"><svg><use href="#delface"/></svg></button>
<button class="tool" aria-label="旋转面"><svg><use href="#rotface"/></svg></button>
<button class="tool" aria-label="倾斜面"><svg><use href="#taperface"/></svg></button>
<button class="tool" aria-label="复制面"><svg><use href="#copyface"/></svg></button>
<button class="tool" aria-label="着色面"><svg><use href="#colorface"/></svg></button>
<span class="split"></span>
<button class="tool" aria-label="复制边"><svg><use href="#copyedge"/></svg></button>
<button class="tool" aria-label="着色边"><svg><use href="#coloredge"/></svg></button>
<span class="split"></span>
<button class="tool" aria-label="压印"><svg><use href="#imprint"/></svg></button>
<button class="tool" aria-label="清除"><svg><use href="#clean"/></svg></button>
<button class="tool" aria-label="分割"><svg><use href="#separate"/></svg></button>
<button class="tool" aria-label="抽壳"><svg><use href="#shell"/></svg></button>
<button class="tool" aria-label="检查"><svg><use href="#check"/></svg></button>
</div>
<div class="d-flex align-items-center ps-1">
<span class="grip"></span>
<button class="tool" aria-label="文字样式"><svg><use href="#textstyle"/></svg></button>
<div class="combo after w-style"><select aria-label="文字样式列表"><option>Standard</option></select><svg class="arrow"><use href="#chev"/></svg></div>
<span class="split invisible"></span>
<button class="tool" aria-label="标注样式"><svg><use href="#dimstyle"/></svg></button>
<div class="combo w-style"><select aria-label="标注样式列表"><option>ISO-25</option></select><svg class="arrow"><use href="#chev"/></svg></div>
<span class="split"></span>
<button class="tool" aria-label="表格样式"><svg><use href="#grid"/></svg></button>
</div>
</div>

<div class="d-flex flex-grow-1 overflow-hidden">
<div class="gutter flex-shrink-0"><svg class="mt-1" width="3" height="16"><path d="M0 4c3 1 3 9 0 11z" fill="#036"/></svg></div>
<div class="work d-flex flex-column flex-grow-1 overflow-hidden">
<main class="d-flex flex-grow-1 overflow-hidden">
<div class="tools d-flex flex-column align-items-center" role="toolbar" aria-label="修改">
<span class="grip grip-h"></span>
<button class="tool" aria-label="删除"><svg><use href="#erase"/></svg></button>
<button class="tool" aria-label="复制对象"><svg><use href="#dup"/></svg></button>
<button class="tool" aria-label="镜像"><svg><use href="#mirror"/></svg></button>
<button class="tool" aria-label="偏移"><svg><use href="#offset"/></svg></button>
<button class="tool" aria-label="阵列"><svg><use href="#array"/></svg></button>
<button class="tool" aria-label="移动"><svg><use href="#move"/></svg></button>
<button class="tool" aria-label="旋转"><svg><use href="#rotate"/></svg></button>
<button class="tool" aria-label="缩放"><svg><use href="#scale"/></svg></button>
<button class="tool" aria-label="拉伸"><svg><use href="#stretch"/></svg></button>
<button class="tool" aria-label="修剪"><svg><use href="#trim"/></svg></button>
<button class="tool" aria-label="延伸"><svg><use href="#extend"/></svg></button>
<button class="tool" aria-label="打断于点"><svg><use href="#brkpt"/></svg></button>
<button class="tool" aria-label="打断"><svg><use href="#brk"/></svg></button>
<button class="tool" aria-label="合并"><svg><use href="#join"/></svg></button>
<button class="tool" aria-label="倒角"><svg><use href="#chamfer"/></svg></button>
<button class="tool" aria-label="圆角"><svg><use href="#fillet"/></svg></button>
<button class="tool" aria-label="分解"><svg><use href="#explode"/></svg></button>
<button class="tool" aria-label="清理"><svg><use href="#broom"/></svg></button>
<button class="tool" aria-label="三维模型"><svg><use href="#bluebox"/></svg></button>
<button class="tool" aria-label="材质"><svg><use href="#trowel"/></svg></button>
<button class="tool" aria-label="渲染"><svg><use href="#planet"/></svg></button>
<button class="tool" aria-label="坐标系"><svg><use href="#ucs"/></svg></button>
<button class="tool" aria-label="折断线"><svg><use href="#redline"/></svg></button>
</div>
<div class="tools d-flex flex-column align-items-center pb-1 border-bottom border-secondary" role="toolbar" aria-label="绘图">
<span class="grip grip-h"></span>
<button class="tool" aria-label="直线"><svg><use href="#seg"/></svg></button>
<button class="tool" aria-label="构造线"><svg><use href="#xline"/></svg></button>
<button class="tool" aria-label="多段线"><svg><use href="#pline"/></svg></button>
<button class="tool" aria-label="正多边形"><svg><use href="#poly"/></svg></button>
<button class="tool" aria-label="矩形"><svg><use href="#rect"/></svg></button>
<button class="tool" aria-label="圆弧"><svg><use href="#arc"/></svg></button>
<button class="tool" aria-label="圆"><svg><use href="#circ"/></svg></button>
<button class="tool" aria-label="修订云线"><svg><use href="#cloud"/></svg></button>
<button class="tool" aria-label="样条曲线"><svg><use href="#spline"/></svg></button>
<button class="tool" aria-label="椭圆"><svg><use href="#ell"/></svg></button>
<button class="tool" aria-label="椭圆弧"><svg><use href="#ellarc"/></svg></button>
<button class="tool" aria-label="插入块"><svg><use href="#insert"/></svg></button>
<button class="tool" aria-label="创建块"><svg><use href="#block"/></svg></button>
<button class="tool" aria-label="点"><svg><use href="#point"/></svg></button>
<button class="tool" aria-label="图案填充"><svg><use href="#hatch"/></svg></button>
<button class="tool" aria-label="渐变色"><svg><use href="#gradient"/></svg></button>
<button class="tool" aria-label="面域"><svg><use href="#region"/></svg></button>
<button class="tool" aria-label="表格"><svg><use href="#grid"/></svg></button>
<button class="tool" aria-label="定数等分"><svg><use href="#divide"/></svg></button>
<button class="tool" aria-label="单行文字"><svg><use href="#dtext"/></svg></button>
<button class="tool" aria-label="多行文字"><svg><use href="#mtext"/></svg></button>
<button class="tool" aria-label="粗糙度"><svg><use href="#rough"/></svg></button>
</div>
<div class="tools d-flex flex-column align-items-center pt-2" role="toolbar" aria-label="建模">
<span class="grip grip-h"></span>
<button class="tool" aria-label="多段体"><svg><use href="#polysolid"/></svg></button>
<button class="tool" aria-label="长方体"><svg><use href="#cube"/></svg></button>
<button class="tool" aria-label="楔体"><svg><use href="#wedge"/></svg></button>
<button class="tool" aria-label="圆锥体"><svg><use href="#cone"/></svg></button>
<button class="tool" aria-label="球体"><svg><use href="#sphere"/></svg></button>
<button class="tool" aria-label="圆柱体"><svg><use href="#cyl"/></svg></button>
<button class="tool" aria-label="圆环体"><svg><use href="#torus"/></svg></button>
<button class="tool" aria-label="棱锥面"><svg><use href="#pyr"/></svg></button>
<button class="tool" aria-label="螺旋"><svg><use href="#helix"/></svg></button>
<button class="tool" aria-label="平面曲面"><svg><use href="#planar"/></svg></button>
<span class="split-h"></span>
<button class="tool" aria-label="拉伸实体"><svg><use href="#exface"/></svg></button>
<button class="tool" aria-label="按住并拖动"><svg><use href="#presspull"/></svg></button>
<button class="tool" aria-label="扫掠"><svg><use href="#sweep"/></svg></button>
<button class="tool" aria-label="旋转实体"><svg><use href="#revolve"/></svg></button>
<button class="tool" aria-label="放样"><svg><use href="#loft"/></svg></button>
<span class="split-h"></span>
<button class="tool" aria-label="并集实体"><svg><use href="#uni"/></svg></button>
<button class="tool" aria-label="差集实体"><svg><use href="#sub"/></svg></button>
<button class="tool" aria-label="交集实体"><svg><use href="#int"/></svg></button>
<span class="split-h"></span>
<button class="tool" aria-label="三维移动"><svg><use href="#ucs3"/></svg></button>
<button class="tool" aria-label="三维旋转"><svg><use href="#orbit"/></svg></button>
<button class="tool" aria-label="三维对齐"><svg><use href="#plane0"/></svg></button>
</div>
<div class="d-flex flex-column flex-grow-1 overflow-hidden">
<div class="stage flex-grow-1 overflow-hidden">
<svg viewBox="88 110 624 487" preserveAspectRatio="xMinYMin meet" role="img" aria-label="五角星线框">
<g fill="none" stroke="#fff" shape-rendering="crispEdges">
<path d="M343 206L483 286L657 235L569 336L707 416L513 398L424 500L393 387L198 369L374 318Z"/>
<path d="M343 206L513 398M657 235L393 387"/>
<path d="M450 345.500h32M465.500 336v19"/><ellipse cx="466" cy="345.500" rx="8" ry="4"/>
<path d="M144.500 544v39M144 583L112 565M144 583L178 565"/>
<ellipse cx="145" cy="583" rx="5" ry="2.500"/>
<circle cx="116" cy="567" r="3"/><circle cx="173" cy="567" r="3"/>
<path d="M140 526.500h8l-8 10h8M98 552l4 5 4-5M102.500 557v5M184 553l9 10M193 553l-9 10"/>
</g>
<path d="M110 563l8 1-4 5zM179 563l-8 1 4 5z" fill="#ccc"/>
<path d="M561 362v17l4-4 4 7 2-1-3-7h4z" fill="#fff"/>
</svg>
</div>
<div class="tabs d-flex flex-shrink-0">
<button class="step" aria-label="第一个"><svg width="10" height="10"><path d="M1.500 1v8" stroke="#000"/><path d="M8 1v8L3 5z"/></svg></button>
<button class="step" aria-label="上一个"><svg width="10" height="10"><path d="M7 1v8L2 5z"/></svg></button>
<button class="step" aria-label="下一个"><svg width="10" height="10"><path d="M3 1v8l5-4z"/></svg></button>
<button class="step" aria-label="最后一个"><svg width="10" height="10"><path d="M8.500 1v8" stroke="#000"/><path d="M2 1v8l5-4z"/></svg></button>
<svg width="12" height="15"><path d="M5 0h7v15h-3z"/></svg>
<button class="sheet current">模型</button>
<svg width="10" height="15"><path d="M0 0h7L2 15H0z"/><path d="M5 5l4 9.500h2M7 0L5 5" stroke="#000" fill="none"/></svg>
<button class="sheet">布局1</button>
<svg width="10" height="15"><path d="M0 14.500h1L7 0M4 6l4 8.500h2" stroke="#000" fill="none"/></svg>
<button class="sheet">布局2</button>
<svg width="10" height="15"><path d="M0 14.500h2L8 0" stroke="#000" fill="none"/></svg>
</div>
<div class="foot flex-shrink-0"></div>
</div>
</main>
<section class="dock d-flex flex-shrink-0" aria-label="命令行">
<span class="grip grip-dock"></span>
<div class="console flex-grow-1">
<div class="log"><div><span class="zh">命令: </span>'_ddptype <span class="zh">正在重生成模型。</span></div><div><span class="zh">正在重生成模型。</span></div></div>
<div class="entry d-flex"><label class="zh" for="cmd">命令:</label><input id="cmd" class="flex-grow-1" autocomplete="off"></div>
</div>
</section>
</div>
</div>
</body>
</html>
